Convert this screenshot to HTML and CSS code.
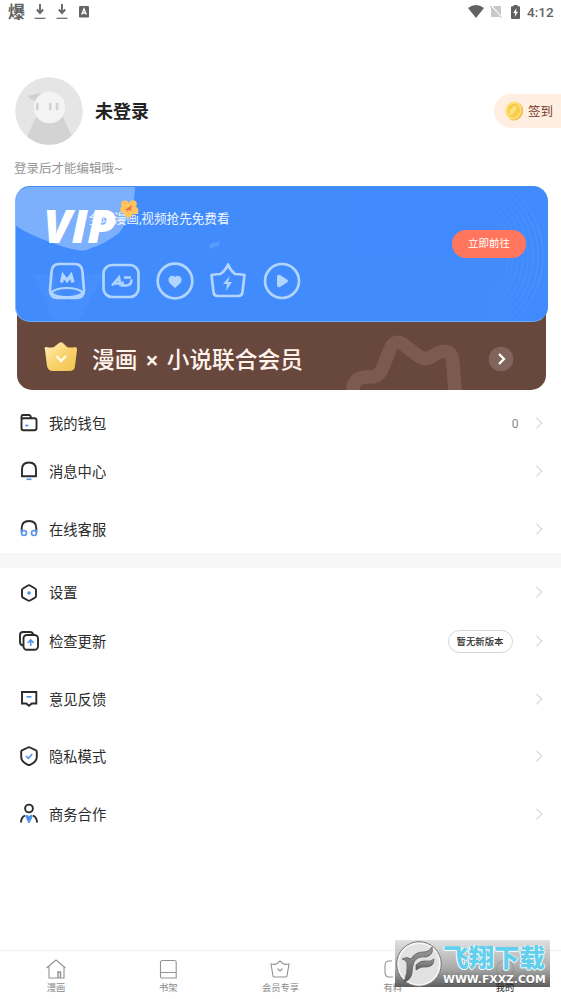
FILE: index.html
```html
<!DOCTYPE html>
<html lang="zh-CN">
<head>
<meta charset="utf-8">
<title>我的</title>
<link rel="stylesheet" href="styles.css">
</head>
<body>
<div class="screen">
  <header class="status">
    <span class="hot">爆</span>
    <svg class="dl" width="12" height="16" viewBox="0 0 12 16"><path d="M6 0v8M2.800 5.500L6 9l3.200-3.500" fill="none" stroke="#686868" stroke-width="1.900"/><path d="M.5 14.300h11" stroke="#686868" stroke-width="1.200"/></svg>
    <svg class="dl" width="12" height="16" viewBox="0 0 12 16"><path d="M6 0v8M2.800 5.500L6 9l3.200-3.500" fill="none" stroke="#686868" stroke-width="1.900"/><path d="M.5 14.300h11" stroke="#686868" stroke-width="1.200"/></svg>
    <svg class="abox" width="11" height="12" viewBox="0 0 11 12"><rect width="10" height="11.500" rx="1.200" fill="#646464"/><path d="M2.700 8.500L5 2.800l2.300 5.700M3.800 7h2.500" fill="none" stroke="#fff" stroke-width="1.400"/></svg>
    <span class="grow"></span>
    <svg width="16" height="13" viewBox="0 0 16 13"><path d="M0 3Q8-3 16 3L8 13z" fill="#626262"/></svg>
    <svg class="sim" width="12" height="13" viewBox="0 0 12 13"><path d="M3.500 1H11v11H1V3.500z" fill="#c8c8c8"/><path d="M0 0l12 13" stroke="#fff" stroke-width="2"/><path d="M0 1l11.500 12" stroke="#aaa" stroke-width="1"/></svg>
    <svg class="batt" width="9" height="14" viewBox="0 0 9 14"><path d="M2.500 0h4v1.300H8q1 0 1 1V13q0 1-1 1H1q-1 0-1-1V2.300q0-1 1-1h1.500z" fill="#606060"/><path d="M5.500 3L2.200 8h2L3.700 12 7 6.800H5z" fill="#fff"/></svg>
    <span class="time">4:12</span>
  </header>

  <section class="profile">
    <svg class="avatar" width="68" height="68" viewBox="0 0 68 68">
      <clipPath id="av"><circle cx="34" cy="34" r="33.700"/></clipPath>
      <g clip-path="url(#av)"><rect width="68" height="68" fill="#e5e5e5"/><path d="M21 40L8 68h53L48 40z" fill="#d3d3d3"/><path d="M12 19l14-3v8h-7z" fill="#d0d0d0"/><circle cx="34.500" cy="30.500" r="15.800" fill="#f3f3f3"/><path d="M45 24l6 7-6 6z" fill="#f3f3f3"/><path d="M22.300 27v5M35.300 27v5M42 27v5" stroke="#d2d2d2" stroke-width="2.600" stroke-linecap="round"/></g>
    </svg>
    <h1 class="name">未登录</h1>
    <div class="signin">
      <svg width="20" height="20" viewBox="0 0 20 20"><ellipse cx="11" cy="10.500" rx="8" ry="9.200" transform="rotate(20 11 10.500)" fill="#ecc151"/><ellipse cx="9.500" cy="9.500" rx="8" ry="9.100" transform="rotate(20 9.500 9.500)" fill="#ffdf6f"/><ellipse cx="9.800" cy="9.600" rx="5.900" ry="7" transform="rotate(20 9.800 9.600)" fill="#f7cb4e"/><path d="M5 13Q5 7 12 4.500q3 4-6 10z" fill="#ffe27b"/></svg>
      <span>签到</span>
    </div>
  </section>
  <p class="hint">登录后才能编辑哦~</p>

  <section class="member">
    <div class="vip">
      <svg class="vip-art" width="534" height="136" viewBox="0 0 534 136">
        <defs><linearGradient id="fade" gradientUnits="userSpaceOnUse" x1="455" x2="525" y1="0" y2="0"><stop stop-color="#5fa2f8" stop-opacity="0"/><stop offset="1" stop-color="#5fa2f8"/></linearGradient></defs>
        <path d="M0 0H120Q120 26 104 47Q88 59 76 62Q68 69 35 56Q10 47 0 39z" fill="#7db0fc"/>
        <path d="M17 88h22l13 30 16-30h22l-26 46H39z" fill="#5197fd" opacity=".4"/>
        <g fill="none" stroke="url(#fade)" stroke-width="1" opacity=".45"><circle cx="440" cy="70" r="53"/><circle cx="440" cy="70" r="58"/><circle cx="440" cy="70" r="63"/><circle cx="440" cy="70" r="68"/><circle cx="440" cy="70" r="73"/><circle cx="440" cy="70" r="78"/><circle cx="440" cy="70" r="83"/><circle cx="440" cy="70" r="88"/></g>
        <path d="M194 60q4-5 7-3l4-2-1 4-9 4z" fill="#5b9dff"/>
      </svg>
      <p class="vip-text">全场漫画,视频抢先免费看</p>
      <span class="vip-word">VIP</span>
      <svg class="flower" width="20" height="18" viewBox="0 0 20 18"><g fill="#ffc45c"><circle cx="6" cy="4.500" r="4"/><circle cx="14" cy="4" r="3.800"/><circle cx="15.700" cy="10.500" r="3.700"/><circle cx="9.500" cy="13.500" r="4"/><circle cx="4.700" cy="9.500" r="3.500"/><circle cx="10" cy="8.500" r="5"/></g><path d="M6 10l4-3 3-2-1 4 1 2-3-1-3 2 1-2z" fill="#f0704c"/></svg>
      <div class="perks">
        <svg width="38" height="38" viewBox="0 0 38 38"><path d="M11 2h16q7 0 7.500 8l1.500 18q0 8-8 8H10q-8 0-8-8l1.500-18Q4 2 11 2z"/><path d="M3 30.500q5-4.500 16-4.500t16 4.500q-4 4.500-16 4.500T3 30.500z" stroke-width="2"/><path d="M13.500 20.500l1.500-7 4 5 4-5 2 7" stroke-width="3.400"/></svg>
        <svg width="38" height="38" viewBox="0 0 38 38"><rect x="1.500" y="3" width="35" height="32" rx="8.500"/><path d="M10 23.500l7-8 1.500 8M13 21.500h5.500M22 15.500h7M29.500 17.500q0 6-5.500 6h-4l1-4" stroke-width="2.600"/></svg>
        <svg width="38" height="38" viewBox="0 0 38 38"><circle cx="19" cy="19" r="17.300"/><path class="solid" d="M19 26l-5-4.500q-3-3.500-.5-6.500 3-2.500 5.500 0 2.500-2.500 5.500 0 2.500 3-.5 6.500z"/></svg>
        <svg width="38" height="38" viewBox="0 0 38 38"><path d="M2.500 13q5-1 9-1Q17 8 19 2.500 21 8 26 12q5 0 9.500 1l-2 17q-.5 4-4.500 4H9q-4 0-4.500-4z" stroke-linejoin="round"/><path class="solid" d="M21 14l-7 8h4l-1 7 6-9h-4z"/></svg>
        <svg width="38" height="38" viewBox="0 0 38 38"><circle cx="19" cy="19" r="17"/><path class="solid" d="M14 15q0-3 3-2l7 4.500q2 1.500 0 3L17 25q-3 1-3-2z"/></svg>
      </div>
      <span class="go">立即前往</span>
    </div>
    <div class="union">
      <svg class="paw" width="120" height="56" viewBox="0 0 120 56"><path d="M7 57Q7 44 19 43H26Q33 43 37 33L43 18Q48 3 58 11L71 21Q79 28 88 21 107 10 107 31L109 57" fill="none" stroke="#7d5a4f" stroke-width="13.500"/></svg>
      <svg class="crown" width="34" height="30" viewBox="0 0 34 30"><defs><linearGradient id="gold" x1="0" x2="1" y2="1"><stop stop-color="#fff1bd"/><stop offset=".5" stop-color="#fbd36f"/><stop offset="1" stop-color="#efc34f"/></linearGradient></defs><path d="M2 5q5 1 8 0l5-4q2-1.500 4 0l4 4q4 1 8 0 2 0 2 3l-2 16q0 5-6 5H9q-5 0-6-5L1 8q-1-3 1-3z" fill="url(#gold)"/><path d="M12.500 14l4.500 5 5-5" fill="none" stroke="#fffbe9" stroke-width="2.400"/></svg>
      <span class="union-text">漫画 × 小说联合会员</span>
      <svg class="round" width="26" height="26" viewBox="0 0 26 26"><circle cx="13" cy="13" r="12.300" fill="#81645b"/><path d="M11 8l5 5-5 5" fill="none" stroke="#fff" stroke-width="2.300"/></svg>
    </div>
  </section>

  <nav class="menu">
    <div class="row"><svg class="icon" viewBox="0 0 22 22"><path d="M3.500 16V4.500q0-1.500 1.500-1.500h6q1 0 1.500 1l.6 2M3.500 8q0-1.800 2-1.800h11q2 0 2 2v8q0 2-2 2h-11q-2 0-2-2z"/><path class="blue" d="M7 13.500h3.500"/></svg><span>我的钱包</span><em>0</em><i></i></div>
    <div class="row"><svg class="icon" viewBox="0 0 22 22"><path d="M4 16.200V9.500q0-7 7-7t7 7v6.700z"/><path class="blue" d="M8.500 19.300h5"/></svg><span>消息中心</span><i></i></div>
    <div class="row gap"><svg class="icon" viewBox="0 0 22 22"><path d="M3.700 14V10q0-7 7.300-7t7.300 7v4"/><g class="blue"><path d="M3.700 11.500V15"/><path d="M18.300 11.500V15"/><circle cx="6" cy="15" r="2.500"/><circle cx="16" cy="15" r="2.500"/></g></svg><span>在线客服</span><i></i></div>
    <div class="divider"></div>
    <div class="row tall"><svg class="icon" viewBox="0 0 22 22"><path d="M10 3.500q1-.6 2 0l5 3q1 .5 1 1.600v6q0 1-1 1.600l-5 2.800q-1 .5-2 0l-5-2.800q-1-.5-1-1.600v-6Q4 7 5 6.500z"/><circle class="dot" cx="11" cy="11" r="1.800"/></svg><span>设置</span><i></i></div>
    <div class="row"><svg class="icon" viewBox="0 0 22 22"><path d="M5 15.500q-3-.5-3-3.500V5q0-3 3-3h7q2.500 0 3.300 2.500"/><rect x="5.500" y="5" width="14.500" height="14.800" rx="3.500"/><path class="blue" d="M12.700 16v-5M9.700 13l3-3 3 3" stroke-width="1.800"/></svg><span>检查更新</span><b>暂无新版本</b><i></i></div>
    <div class="row gap"><svg class="icon" viewBox="0 0 22 22"><path d="M4 4h14.300v11.500h-4.500L11 17.800l-2.800-2.300H4z"/><path class="blue" d="M8.500 8.800h5"/></svg><span>意见反馈</span><i></i></div>
    <div class="row gap-s"><svg class="icon" viewBox="0 0 22 22"><path d="M10 2.500q1-.6 2 0l6 2.800q.8.400.8 1.500v5q0 5-6.800 8-1 .5-2 0-6.800-3-6.800-8v-5q0-1 .8-1.500z"/><path class="blue" d="M8 11l2.300 2.300 4-4.300"/></svg><span>隐私模式</span><i></i></div>
    <div class="row gap"><svg class="icon" viewBox="0 0 22 22"><circle cx="11" cy="5.500" r="3.900"/><path d="M3 19.500q0-5 4-7M19 19.500q0-5-4-7"/><path d="M8 12l3 1.500 3-1.500v2l-3 6-3-6z" fill="#4f91e6" stroke="#4f91e6" stroke-width="1"/></svg><span>商务合作</span><i></i></div>
  </nav>

  <footer class="tabs">
    <div class="tab"><svg viewBox="0 0 22 22"><path d="M1.500 10L11 2l9.500 8M4 8.500V20h15V8.500"/><path d="M13 20v-6h2.500v6" stroke-width="1.500"/></svg><span>漫画</span></div>
    <div class="tab"><svg viewBox="0 0 22 22"><path d="M3.500 18.500v-14q0-2 2-2h12q1.700 0 1.700 2V20H5q-1.500 0-1.500-1.500zM3.500 14.500h15.700"/></svg><span>书架</span></div>
    <div class="tab"><svg viewBox="0 0 22 22"><path d="M2 6q4 1 6-.5L11 3l3 2.500q2 1.500 6 .5l-2 12q0 1-2 1H6q-2 0-2-1zM8.500 10.500L11 13l2.500-2.500"/></svg><span>会员专享</span></div>
    <div class="tab"><svg viewBox="0 0 22 22"><path d="M10 3H7Q3 3 3 8v6q0 5 4 5h4M14 3h3q3 0 3 4v8"/></svg><span>有料</span></div>
    <div class="tab active"><svg viewBox="0 0 22 22"><circle cx="11" cy="11" r="8.500"/><path d="M7 12q4 5 8 0"/></svg><span>我的</span></div>
    <div class="mark">
      <svg class="mark-logo" width="48" height="48" viewBox="0 0 48 48"><defs><linearGradient id="steel" x2="0" y2="1"><stop stop-color="#9a9a9a"/><stop offset="1" stop-color="#5c5c5c"/></linearGradient></defs><circle cx="24" cy="24" r="22.300" fill="#f4f4f4" stroke="#777" stroke-width="1"/><circle cx="24" cy="24" r="20" fill="#e2e2e2"/><g fill="url(#steel)" stroke="#555" stroke-width=".7"><path d="M7 19Q12 16 16 19 20 12 28 12q6 0 9-5 2 8-6 10-9-1-12 5-2 5-2 11-1 7-8 9 4-10 3-19-2-4-5-4z"/><path d="M21 25q5-5 10-4 5 1 8-2 0 8-8 8-5-1-10 3z"/></g></svg>
      <div class="mark-words"><strong>飞翔下载</strong><small>WWW.FXXZ.COM</small></div>
    </div>
  </footer>
</div>
</body>
</html>
```
FILE: styles.css
```css
* { box-sizing: border-box; }
body { margin: 0; background: #fff; font-family: Roboto, "Noto Sans CJK SC", sans-serif; color: #222; }
h1, p { margin: 0; }
.screen { width: 561px; height: 999px; display: flex; flex-direction: column; overflow: hidden; }
.screen svg { flex: none; }

.status { height: 23px; flex: none; display: flex; align-items: center; padding: 0 8px; color: #626262; }
.hot { width: 26px; font-size: 17px; line-height: 22px; font-weight: 700; }
.dl { margin-right: 10px; }
.abox { margin-left: 1px; }
.grow { flex: 1; }
.sim { margin-left: 6px; }
.batt { margin-left: 9px; }
.time { margin-left: 7px; font-size: 13.5px; line-height: 22px; font-weight: 500; width: 26px; white-space: nowrap; }

.profile { height: 68px; flex: none; margin-top: 54px; padding-left: 15px; display: flex; align-items: center; }
.name { margin: 2px 0 0 12px; font-size: 18px; line-height: 26px; font-weight: 700; color: #222; }
.signin { margin-left: auto; width: 67px; height: 34px; border-radius: 17px 0 0 17px; background: #ffefe3; display: flex; align-items: center; padding-left: 10px; gap: 4px; font-size: 12.5px; color: #773923; white-space: nowrap; }
.signin span { margin-top: -2px; }
.hint { margin: 15px 0 0 14px; height: 18px; flex: none; font-size: 12.5px; line-height: 18px; color: #969696; }

.member { margin: 8px 13px 0 14.5px; height: 204px; flex: none; }
.vip { position: relative; z-index: 1; height: 136px; border-radius: 15px; background: #418bfd; border: 1.5px solid #3f91ee; border-left-color: #82baff; border-bottom-color: #6aa9f5; overflow: hidden; }
.vip-art { position: absolute; left: -1px; top: -1px; }
.vip-word { position: absolute; left: 28px; top: 13px; font: italic 800 46px/50px "Open Sans", sans-serif; letter-spacing: -.5px; color: #fff; }
.vip-text { position: absolute; left: 73px; top: 23px; font-size: 12.6px; line-height: 18px; color: #edf5ff; white-space: nowrap; }
.flower { position: absolute; left: 103px; top: 13px; }
.perks { position: absolute; left: 32.5px; top: 75px; display: flex; gap: 15.8px; }
.perks svg { fill: none; stroke: #b1d5ff; stroke-width: 2.7; }
.perks .solid { fill: #b1d5ff; stroke: none; }
.go { position: absolute; right: 21px; top: 43px; width: 74px; height: 28px; border-radius: 14px; background: #ff765d; color: #fff; font-size: 10.5px; line-height: 27px; text-align: center; }
.union { position: relative; height: 85px; margin: -17px 2px 0 2.5px; padding: 23px 32px 0 27px; border-radius: 0 0 15px 15px; background: #68473c; display: flex; align-items: center; overflow: hidden; }
.paw { position: absolute; left: 329px; bottom: 0; }
.crown { margin-bottom: 5px; }
.union-text { margin: 3px 0 0 14px; font-size: 22.7px; line-height: 32px; font-weight: 500; word-spacing: 3px; color: #fff3ec; white-space: nowrap; }
.round { margin-left: auto; }

.menu { margin-top: 9px; }
.row { height: 48px; display: flex; align-items: center; padding: 0 20px 0 18px; font-size: 14.3px; color: #2b2b2b; }
.row.tall { height: 49px; }
.gap { margin-top: 10px; }
.gap-s { margin-top: 9px; }
.icon { width: 22px; height: 22px; margin-right: 9px; fill: none; stroke: #2b2b2b; stroke-width: 1.9; }
.icon .blue { stroke: #5593e8; stroke-width: 1.6; }
.icon .dot { fill: #4f91e6; stroke: none; }
.row span { flex: 1; margin-top: -2px; }
.row em { font-style: normal; font-size: 12px; color: #888; margin: 1px 14px 0 0; }
.row b { width: 65px; height: 23px; border: 1px solid #d6d6d6; border-radius: 12px; font-size: 9.4px; line-height: 21px; font-weight: 500; text-align: center; margin-right: 20px; }
.row i { width: 7.5px; height: 7.5px; border: solid #d2d2d2; border-width: 1.5px 1.5px 0 0; transform: rotate(45deg); margin: -1px 1px 0 0; }
.divider { height: 15px; background: #f7f7f7; }

.tabs { position: relative; margin-top: auto; height: 49px; flex: none; border-top: 1px solid #f1f1f1; display: grid; grid-template-columns: repeat(5, 1fr); }
.tab { display: flex; flex-direction: column; align-items: center; padding-top: 7px; font-size: 9.3px; line-height: 14px; color: #888; }
.tab svg { width: 22px; height: 22px; fill: none; stroke: #939393; stroke-width: 1.1; margin-bottom: 1px; }
.active { color: #222; }
.active span { position: relative; z-index: 2; }
.mark { position: absolute; left: 395px; top: -11px; width: 155px; height: 47px; display: flex; background: linear-gradient(rgba(215,215,215,.75), rgba(155,155,155,.85) 60%, rgba(85,85,85,.95)); }
.mark-words { width: 106px; display: flex; flex-direction: column; white-space: nowrap; }
.mark strong { margin-top: 3px; font-size: 25.5px; line-height: 30px; font-weight: 900; color: #63cfed; text-shadow: 1px 0 #f4ffff, -1px 0 #f4ffff, 0 1px #f4ffff; }
.mark small { font: 700 10.8px/13px "DejaVu Sans", sans-serif; color: #fff; text-shadow: 0 1px #555; }
```
